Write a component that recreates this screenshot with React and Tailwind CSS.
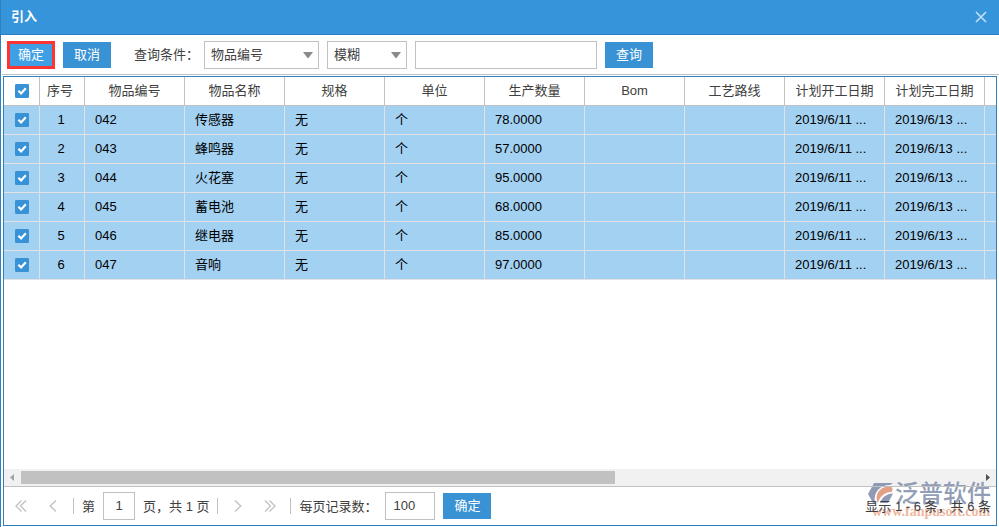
import React, { useState } from 'react';

const columns = ['物品编号', '物品名称', '规格', '单位', '生产数量', 'Bom', '工艺路线', '计划开工日期', '计划完工日期'];

const rows = [
  { code: '042', name: '传感器', spec: '无', unit: '个', qty: '78.0000' },
  { code: '043', name: '蜂鸣器', spec: '无', unit: '个', qty: '57.0000' },
  { code: '044', name: '火花塞', spec: '无', unit: '个', qty: '95.0000' },
  { code: '045', name: '蓄电池', spec: '无', unit: '个', qty: '68.0000' },
  { code: '046', name: '继电器', spec: '无', unit: '个', qty: '85.0000' },
  { code: '047', name: '音响', spec: '无', unit: '个', qty: '97.0000' },
];

function Check({ checked, onChange, label }) {
  return (
    <label className="relative mx-auto block size-[14px]">
      <input
        type="checkbox"
        aria-label={label}
        checked={checked}
        onChange={onChange}
        className="block size-[14px] appearance-none rounded-[1px] border border-[#3892d4] bg-white checked:bg-[#3892d8]"
      />
      {checked && (
        <svg viewBox="0 0 14 14" className="pointer-events-none absolute inset-0 size-[14px]" fill="none" stroke="#fff" strokeWidth="2.2">
          <path d="M3.4 6.8 L6.1 9.4 L10.8 4.3" />
        </svg>
      )}
    </label>
  );
}

function Select({ label, options, className }) {
  return (
    <div className={`relative ${className}`}>
      <select
        aria-label={label}
        className="block h-7 w-full appearance-none border border-[#c1c1c1] bg-white pl-[6px] text-[13px] text-[#404040] outline-none"
      >
        {options.map((o) => <option key={o}>{o}</option>)}
      </select>
      <svg viewBox="0 0 10 6" className="pointer-events-none absolute top-[11px] right-[6px] h-[6px] w-[10px]" fill="#8a8a8a">
        <path d="M0 0 H10 L5.5 6 H4.5 Z" />
      </svg>
    </div>
  );
}

function PageArrow({ label, double, next }) {
  return (
    <button type="button" aria-label={label} className="flex size-6 items-center justify-center">
      <svg viewBox="0 0 12 12" className={`size-3 ${next ? 'rotate-180' : ''}`} fill="none" stroke="#c0c0c0" strokeWidth="1.3">
        {double ? <path d="M6.5 0.5 L1 6 L6.5 11.5 M11 0.5 L5.5 6 L11 11.5" /> : <path d="M9 0.5 L3.2 6 L9 11.5" />}
      </svg>
    </button>
  );
}

function Watermark() {
  return (
    <div className="pointer-events-none absolute right-[6px] bottom-[6px] w-[122px]">
      <div className="flex items-center gap-px">
        <svg viewBox="0 0 26 22" className="h-[22px] w-[26px] shrink-0">
          <path d="M6 0 H25 L22 2 C12 2 5 9 7 20 H5 L0 11 Z" fill="#8f9ab5" />
          <path d="M10 20 C6 11 12 3 23 3.5 C25 5 25 7 23.5 9 C17 9 12 13 10 20 Z" fill="#e2a085" />
          <path d="M12 20 C14 14 18 11 25 10.5 L20 20 Z" fill="#8f9ab5" />
        </svg>
        <span className="text-[24px] leading-[22px] font-medium whitespace-nowrap text-[#929db7]">泛普软件</span>
      </div>
      <div className="pl-1 font-['Liberation_Serif',serif] text-[14px] leading-[14px] font-bold text-[#eeb7a1]">www.fanpusoft.com</div>
    </div>
  );
}

export default function App() {
  const [selected, setSelected] = useState(rows.map(() => true));
  const all = selected.every(Boolean);

  const toggle = (i) => setSelected(selected.map((s, n) => (n === i ? !s : s)));

  return (
    <div className="flex min-h-screen flex-col border-l border-[#3080bd] bg-white font-['Liberation_Sans','Noto_Sans_CJK_SC',sans-serif] text-[13px] text-[#404040]">
      {/* Title bar */}
      <header className="flex h-[35px] items-center justify-between border-b border-[#2b7fc0] bg-[#3694db] pr-3 pl-[10px]">
        <h1 className="font-bold text-white">引入</h1>
        <button type="button" aria-label="关闭">
          <svg viewBox="0 0 12 12" className="size-3" fill="none" stroke="#c3dff4" strokeWidth="1.6">
            <path d="M1 1 L11 11 M11 1 L1 11" />
          </svg>
        </button>
      </header>

      {/* Query bar */}
      <div className="ml-px flex h-10 items-center border-b border-[#c1c1c1] pl-[5px]">
        <button type="button" className="h-7 w-12 border-3 border-[#fb3434] bg-[#3f9fe5] leading-5 text-white">确定</button>
        <button type="button" className="ml-2 h-[26px] w-12 bg-[#3892d4] text-white">取消</button>
        <span className="ml-[23px] w-[70px] whitespace-nowrap">查询条件：</span>
        <Select label="查询条件" options={['物品编号', '物品名称']} className="w-[115px]" />
        <Select label="匹配方式" options={['模糊', '精确']} className="ml-2 w-20" />
        <input type="text" aria-label="关键字" className="ml-2 h-7 w-[182px] border border-[#c1c1c1] px-[6px] outline-none" />
        <button type="button" className="ml-2 h-[26px] w-12 bg-[#3892d4] text-white">查询</button>
      </div>

      {/* Grid panel */}
      <div className="relative mt-px mr-[2px] mb-px ml-[2px] flex flex-1 flex-col border border-[#3080bd]">
        <div className="flex-1 overflow-hidden">
          <table className="w-[1600px] table-fixed border-separate border-spacing-0">
            <colgroup>
              <col className="w-9" />
              <col className="w-[45px]" />
              {columns.map((c) => <col key={c} className="w-[100px]" />)}
              <col />
            </colgroup>
            <thead>
              <tr className="h-[29px] [&>th]:border-r [&>th]:border-b [&>th]:border-[#c1c1c1] [&>th]:p-0 [&>th]:font-normal">
                <th><Check label="全选" checked={all} onChange={() => setSelected(rows.map(() => !all))} /></th>
                <th><div className="pr-1">序号</div></th>
                {columns.map((c) => <th key={c}>{c}</th>)}
                <th></th>
              </tr>
            </thead>
            <tbody className="text-black">
              {rows.map((row, i) => (
                <tr
                  key={row.code}
                  className={`h-[29px] [&>td]:border-r [&>td]:border-b [&>td]:border-[#e2e2e2] [&>td]:py-0 [&>td]:pr-0 [&>td]:pl-[10px] ${selected[i] ? 'bg-[#a3d1f2]' : 'bg-white'}`}
                >
                  <td className="pl-0!"><Check label={`选择 ${row.name}`} checked={selected[i]} onChange={() => toggle(i)} /></td>
                  <td className="pr-[2px]! pl-0! text-center">{i + 1}</td>
                  <td>{row.code}</td>
                  <td>{row.name}</td>
                  <td>{row.spec}</td>
                  <td>{row.unit}</td>
                  <td>{row.qty}</td>
                  <td></td>
                  <td></td>
                  <td>2019/6/11 ...</td>
                  <td>2019/6/13 ...</td>
                  <td></td>
                </tr>
              ))}
            </tbody>
          </table>
        </div>

        {/* Horizontal scrollbar */}
        <div className="flex h-[17px] items-center bg-[#f1f1f1]">
          <svg viewBox="0 0 17 17" className="size-[17px] shrink-0" fill="#a3a3a3"><path d="M10 5 V12 L6 8.5 Z" /></svg>
          <div className="h-[13px] flex-1">
            <div className="h-full w-[62%] bg-[#c1c1c1]"></div>
          </div>
          <svg viewBox="0 0 17 17" className="size-[17px] shrink-0" fill="#505050"><path d="M7 5 V12 L11 8.5 Z" /></svg>
        </div>

        <Watermark />

        {/* Paging bar */}
        <footer className="relative flex h-[39px] items-center border-t border-[#c1c1c1] pr-[5px] pl-[5px] whitespace-nowrap">
          <PageArrow label="第一页" double />
          <div className="ml-2"><PageArrow label="上一页" /></div>
          <div className="ml-2 h-4 w-px bg-[#c1c1c1]"></div>
          <label htmlFor="page" className="ml-2 pt-[2px]">第</label>
          <input id="page" defaultValue="1" className="ml-2 h-7 w-8 border border-[#c1c1c1] pb-px text-center outline-none" />
          <span className="ml-2 pt-[2px]">页，共 1 页</span>
          <div className="ml-2 h-4 w-px bg-[#c1c1c1]"></div>
          <div className="ml-2"><PageArrow label="下一页" next /></div>
          <div className="ml-2"><PageArrow label="最后一页" double next /></div>
          <div className="ml-2 h-4 w-px bg-[#c1c1c1]"></div>
          <label htmlFor="size" className="ml-2 w-[86px] pt-[2px]">每页记录数：</label>
          <input id="size" defaultValue="100" className="h-7 w-[50px] border border-[#c1c1c1] px-[7px] pb-px outline-none" />
          <button type="button" className="ml-2 h-[26px] w-12 bg-[#3892d4] text-white">确定</button>
          <span className="ml-auto pt-[2px]">显示 1 - 6 条，共 6 条</span>
        </footer>
      </div>
    </div>
  );
}
